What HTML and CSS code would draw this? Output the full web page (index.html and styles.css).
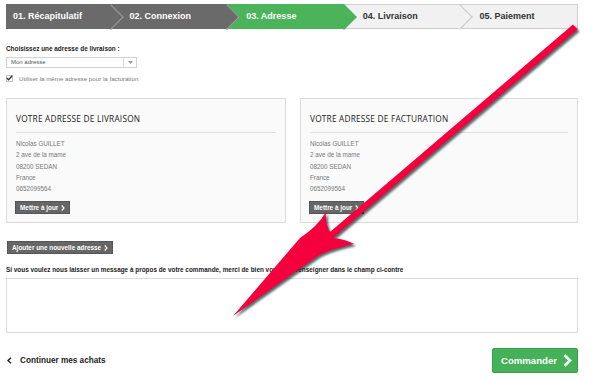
FILE: index.html
```html
<!DOCTYPE html>
<html lang="fr">
<head>
    <meta charset="UTF-8">
    <meta name="viewport" content="width=device-width, initial-scale=1.0">
    <title>Adresse - Commande</title>
    <link rel="stylesheet" href="styles.css">
</head>
<body>
<div class="page">
    <!-- étapes de la commande -->
    <ul class="steps">
        <li class="step done">01. Récapitulatif</li>
        <li class="step done">02. Connexion</li>
        <li class="step current">03. Adresse</li>
        <li class="step todo">04. Livraison</li>
        <li class="step todo last">05. Paiement</li>
    </ul>

    <p class="field-label">Choisissez une adresse de livraison :</p>
    <div class="select">
        <span class="select-value">Mon adresse</span>
        <span class="select-btn">
            <svg width="5" height="3" viewBox="0 0 5 3"><path d="M0 0 L5 0 L2.5 3 Z" fill="#999"/></svg>
        </span>
    </div>

    <label class="check">
        <span class="check-box">
            <svg width="7" height="6" viewBox="0 0 7 6"><path d="M0.8 3 L2.6 4.8 L6.2 0.8" fill="none" stroke="#333" stroke-width="1.3"/></svg>
        </span>
        Utiliser la même adresse pour la facturation
    </label>

    <!-- adresses -->
    <div class="addresses">
        <div class="address-box">
            <h3>VOTRE ADRESSE DE LIVRAISON</h3>
            <ul class="address-lines">
                <li>Nicolas GUILLET</li>
                <li>2 ave de la mame</li>
                <li>08200 SEDAN</li>
                <li>France</li>
                <li>0652099564</li>
            </ul>
            <a class="btn-dark" href="#">Mettre à jour
                <svg width="4" height="6" viewBox="0 0 4 6"><path d="M0.7 0.5 L3 3 L0.7 5.5" fill="none" stroke="#fff" stroke-width="1.2"/></svg>
            </a>
        </div>
        <div class="address-box">
            <h3>VOTRE ADRESSE DE FACTURATION</h3>
            <ul class="address-lines">
                <li>Nicolas GUILLET</li>
                <li>2 ave de la mame</li>
                <li>08200 SEDAN</li>
                <li>France</li>
                <li>0652099564</li>
            </ul>
            <a class="btn-dark" href="#">Mettre à jour
                <svg width="4" height="6" viewBox="0 0 4 6"><path d="M0.7 0.5 L3 3 L0.7 5.5" fill="none" stroke="#fff" stroke-width="1.2"/></svg>
            </a>
        </div>
    </div>

    <a class="btn-dark btn-add" href="#">Ajouter une nouvelle adresse
        <svg width="4" height="6" viewBox="0 0 4 6"><path d="M0.7 0.5 L3 3 L0.7 5.5" fill="none" stroke="#fff" stroke-width="1.2"/></svg>
    </a>

    <p class="message-label">Si vous voulez nous laisser un message à propos de votre commande, merci de bien vouloir le renseigner dans le champ ci-contre</p>
    <div class="message-box"></div>

    <div class="cart-footer">
        <a class="back-link" href="#">
            <svg width="5" height="7" viewBox="0 0 5 7"><path d="M4 0.7 L1 3.5 L4 6.3" fill="none" stroke="#222" stroke-width="1.4"/></svg>
            Continuer mes achats
        </a>
        <a class="btn-order" href="#">Commander
            <svg width="9" height="13" viewBox="0 0 9 13"><path d="M1.5 1.3 L7 6.5 L1.5 11.7" fill="none" stroke="#fff" stroke-width="2.6"/></svg>
        </a>
    </div>

    <!-- flèche rouge d'annotation -->
    <svg class="annotation" width="600" height="378" viewBox="0 0 600 378">
        <path d="M573 24.5 L577.5 29.5 L333 238 Q345 239 354 244 Q328 250 318 256 L233 316 L300 238 Q318 226 326 212 Q325 224 330 232 Z" fill="#f4003c"/>
    </svg>
</div>
</body>
</html>
```

FILE: styles.css
```css
/* base */
body {
    margin: 0;
    background: #fff;
    font-family: "Liberation Sans", Arial, sans-serif;
    color: #222;
}

.page {
    position: relative;
    width: 600px;
    height: 378px;
    box-sizing: border-box;
    padding: 4px 22px 0 6px;
    overflow: hidden;
}

/* étapes */
.steps {
    display: flex;
    list-style: none;
    margin: 0;
    padding: 0;
    height: 25px;
}

.step {
    flex: 1;
    position: relative;
    box-sizing: border-box;
    height: 25px;
    line-height: 25px;
    padding-left: 19px;
    font-size: 9px;
    font-weight: bold;
    color: #fff;
    white-space: nowrap;
}

.step:first-child {
    padding-left: 7px;
}

.step::after {
    content: '';
    position: absolute;
    top: 3.5px;
    right: -9px;
    width: 17px;
    height: 17px;
    background: inherit;
    border-top: 1px solid transparent;
    border-right: 1px solid transparent;
    transform: rotate(45deg);
    z-index: 2;
}

.step.done {
    background: #6a6a6a;
}

.step.done::after {
    border-color: #9c9c9c;
}

.step.current {
    background: #4bb35a;
}

.step.current::after {
    border-color: #4bb35a;
}

.step.todo {
    background: #f1f1f1;
    color: #333;
    border-top: 1px solid #cfcfcf;
    border-bottom: 1px solid #cfcfcf;
    line-height: 23px;
}

.step.todo::after {
    top: 2.5px;
    border-color: #c6c6c6;
}

.step.last {
    border-right: 1px solid #cfcfcf;
}

.step.last::after {
    display: none;
}

/* choix de l'adresse */
.field-label {
    margin: 15px 0 0;
    font-size: 6.4px;
    font-weight: bold;
    line-height: 9px;
}

.select {
    display: flex;
    width: 131px;
    height: 11px;
    box-sizing: border-box;
    margin-top: 4px;
    border: 1px solid #d2d2d2;
    background: #fff;
}

.select-value {
    flex: 1;
    padding-left: 4px;
    font-size: 6px;
    line-height: 9px;
    color: #555;
}

.select-btn {
    width: 12px;
    border-left: 1px solid #ddd;
    display: flex;
    align-items: center;
    justify-content: center;
}

.check {
    display: flex;
    align-items: center;
    gap: 6px;
    height: 8px;
    margin-top: 6px;
    font-size: 6.2px;
    color: #777;
}

.check-box {
    width: 5px;
    height: 5px;
    border: 1px solid #c4c4c4;
    position: relative;
}

.check-box svg {
    position: absolute;
    left: -1px;
    top: -1px;
}

/* blocs adresse */
.addresses {
    display: grid;
    grid-template-columns: 280px 278px;
    gap: 14px;
    margin-top: 16px;
}

.address-box {
    height: 125px;
    box-sizing: border-box;
    border: 1px solid #dcdcdc;
    background: #fafafa;
    padding: 14px 9px 7px;
}

.address-box h3 {
    margin: 0;
    padding-bottom: 7px;
    border-bottom: 1px solid #e0e0e0;
    font-family: "Open Sans", sans-serif;
    font-size: 8.3px;
    font-weight: normal;
    line-height: 12px;
    letter-spacing: 0.2px;
    color: #222;
}

.address-lines {
    list-style: none;
    margin: 5px 0 0;
    padding: 0;
    font-size: 6.3px;
    line-height: 11.25px;
    color: #777;
}

/* boutons */
.btn-dark {
    display: inline-flex;
    align-items: center;
    gap: 3px;
    height: 13px;
    box-sizing: border-box;
    margin: 7px 0 0 -1px;
    padding: 0 4px;
    background: #666;
    border: 1px solid #555;
    color: #fff;
    font-size: 6.4px;
    font-weight: bold;
    text-decoration: none;
}

.btn-add {
    margin: 18px 0 0 1px;
}

.message-label {
    margin: 11px 0 0;
    font-size: 6.4px;
    font-weight: bold;
    line-height: 9px;
}

.message-box {
    height: 55px;
    box-sizing: border-box;
    margin-top: 4px;
    border: 1px solid #dcdcdc;
    background: #fff;
}

.cart-footer {
    display: flex;
    justify-content: space-between;
    align-items: center;
    margin-top: 15px;
}

.back-link {
    display: flex;
    align-items: center;
    gap: 8px;
    margin-left: 1px;
    font-size: 8.2px;
    font-weight: bold;
    color: #222;
    text-decoration: none;
}

.btn-order {
    display: flex;
    align-items: center;
    gap: 6px;
    width: 86px;
    height: 25px;
    box-sizing: border-box;
    padding-left: 8px;
    background: #45b158;
    border: 1px solid #3b9c4c;
    border-radius: 2px;
    color: #fff;
    font-size: 9.6px;
    font-weight: bold;
    text-decoration: none;
}

/* flèche */
.annotation {
    position: absolute;
    top: 0;
    left: 0;
    pointer-events: none;
    filter: drop-shadow(2px 2px 1.2px rgba(20, 40, 40, 0.7));
}
```
